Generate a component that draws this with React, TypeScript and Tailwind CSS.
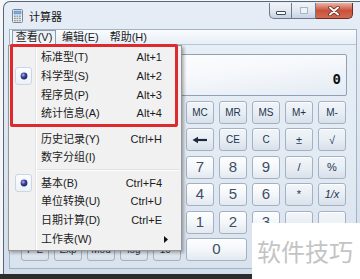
import React from "react";

type Cell = {
  t?: React.ReactNode;
  k?: "d" | "o" | "s";
  cls?: string;
};

function CalcBtn({ t, k = "o", cls = "" }: Cell) {
  const base =
    "flex items-center justify-center rounded-[3px] border border-[#a3b1c2] shadow-[inset_0_1px_0_rgba(255,255,255,0.9)] select-none";
  const tone =
    k === "d"
      ? "bg-linear-to-b from-[#fdfefe] via-[#f4f7fa] to-[#e3e9f0] text-[15px] text-[#3e4f64]"
      : k === "s"
      ? "bg-linear-to-b from-[#f3f6fa] via-[#e9eef4] to-[#d9e1ea] text-[10px] text-[#22364f]"
      : "bg-linear-to-b from-[#f1f5f9] via-[#e8eef4] to-[#d8e0ea] text-[10px] text-[#22364f]";
  return <div className={`${base} ${tone} ${cls}`}>{t}</div>;
}

function BackArrow() {
  return (
    <svg width="16" height="8" viewBox="0 0 16 8">
      <path d="M5 4 H15" stroke="#1c2a3c" strokeWidth="2.2" />
      <path d="M0.5 4 L6 0.8 L6 7.2 Z" fill="#1c2a3c" />
    </svg>
  );
}

function Bullet() {
  return (
    <div className="ml-[6px] w-[17px] h-[18px] rounded-[3px] border border-[#c9d6e5] bg-linear-to-b from-[#fbfcfe] to-[#edf2f8] flex items-center justify-center">
      <svg width="8" height="8" viewBox="0 0 8 8">
        <defs>
          <radialGradient id="bg1" cx="0.38" cy="0.35" r="0.7">
            <stop offset="0" stopColor="#b4b9ec" />
            <stop offset="0.45" stopColor="#3d469f" />
            <stop offset="1" stopColor="#1a205c" />
          </radialGradient>
        </defs>
        <circle cx="4" cy="4" r="3.4" fill="url(#bg1)" />
      </svg>
    </div>
  );
}

function MenuItem({
  label,
  sc,
  bullet = false,
  arrow = false,
}: {
  label: string;
  sc?: string;
  bullet?: boolean;
  arrow?: boolean;
}) {
  return (
    <div className="flex items-center h-[18.75px] text-[11px] text-[#1c1c1c]">
      <div className="w-[32px] h-full flex items-center">{bullet ? <Bullet /> : null}</div>
      <div className="flex-1 whitespace-nowrap">{label}</div>
      {sc ? <div className="pr-[19px] whitespace-nowrap">{sc}</div> : null}
      {arrow ? (
        <div className="pr-[13px]">
          <svg width="4" height="7" viewBox="0 0 4 7">
            <path d="M0 0 L4 3.5 L0 7 Z" fill="#111" />
          </svg>
        </div>
      ) : null}
    </div>
  );
}

function Sep() {
  return (
    <div className="h-[6.5px] flex flex-col justify-center pl-[28px] pr-[2px]">
      <div className="h-px bg-[#e0e0e0]" />
      <div className="h-px bg-white" />
    </div>
  );
}

function TitleIcon() {
  return (
    <svg width="11" height="14" viewBox="0 0 11 14">
      <rect x="0.5" y="0.5" width="10" height="13" rx="1" fill="#eef1f4" stroke="#7a8591" />
      <rect x="2" y="2" width="7" height="3" fill="#79aee3" stroke="#4f7fb3" strokeWidth="0.5" />
      {[0, 1, 2].map((r) =>
        [0, 1, 2].map((c) => (
          <rect key={`${r}-${c}`} x={2 + c * 2.5} y={6.5 + r * 2.2} width="1.8" height="1.4" fill="#8d97a2" />
        ))
      )}
    </svg>
  );
}

export default function App() {
  const cells: Cell[] = [
    { t: "" }, { t: "Inv" }, { t: "ln" }, { t: "(" }, { t: ")" },
    { t: <BackArrow /> }, { t: "CE" }, { t: "C" }, { t: "±", cls: "text-[11px]" }, { t: "√", cls: "text-[11px]" },
    { t: "Int" }, { t: "sinh" }, { t: "sin" }, { t: "x²" }, { t: "n!" },
    { t: "7", k: "d" }, { t: "8", k: "d" }, { t: "9", k: "d" }, { t: "/", k: "s", cls: "text-[11px]" }, { t: "%", cls: "text-[11px]" },
    { t: "dms" }, { t: "cosh" }, { t: "cos" }, { t: "xʸ" }, { t: "ʸ√x" },
    { t: "4", k: "d" }, { t: "5", k: "d" }, { t: "6", k: "d" }, { t: "*", k: "s", cls: "text-[11px]" }, { t: "1/x", cls: "text-[11px] italic" },
    { t: "π" }, { t: "tanh" }, { t: "tan" }, { t: "x³" }, { t: "∛x" },
    { t: "1", k: "d" }, { t: "2", k: "d" }, { t: "3", k: "d" }, { t: "-", k: "s", cls: "text-[11px]" }, { t: "", cls: "row-span-2" },
    { t: "F-E" }, { t: "Exp" }, { t: "Mod" }, { t: "log" }, { t: "10ˣ" },
    { t: "0", k: "d", cls: "col-span-2" }, { t: ".", k: "d" }, { t: "+", k: "s", cls: "text-[12px]" },
  ];

  return (
    <div className="relative w-[360px] h-[279px] overflow-hidden bg-[#2c2c2c] font-['Liberation_Sans','Noto_Sans_CJK_SC',sans-serif]">
      <div className="h-[274px] bg-[#f6f6f6] flex flex-col">
        <div className="ml-[3px] mt-[1px] w-[362px] h-[273px] flex flex-col rounded-tl-[7px] border-l border-t border-[#56667b] bg-linear-to-b from-[#e6edf6] via-[#dce6f1] to-[#d2deeb]">
          <div className="h-[27px] flex items-start">
            <div className="ml-[8px] mt-[7px]">
              <TitleIcon />
            </div>
            <div className="ml-[6px] mt-[6px] text-[11px] text-[#141414] font-['Noto_Sans_CJK_SC',sans-serif]">计算器</div>
            <div className="ml-auto mr-[12px] mt-[1px] flex h-[16px]">
              <div className="w-[23px] h-full rounded-bl-[5px] border border-t-0 border-[#6b7a8e] bg-linear-to-b from-[#f1f4f8] via-[#e1e8f0] to-[#c6d2e0] flex items-end justify-center pb-[3px]">
                <div className="w-[10px] h-[4px] border border-[#3c4b5e] bg-white rounded-[1px]" />
              </div>
              <div className="w-[24px] h-full border-b border-r border-[#6b7a8e] bg-linear-to-b from-[#f1f4f8] via-[#e1e8f0] to-[#c6d2e0] flex items-center justify-center">
                <div className="w-[8px] h-[7px] border border-[#a9b6c5] bg-[#eef2f6]" />
              </div>
              <div className="w-[37px] h-full rounded-br-[5px] border-b border-r border-[#6b2d22] bg-linear-to-b from-[#eab1a3] via-[#c9513b] to-[#d26a52] flex items-center justify-center">
                <svg width="12" height="10" viewBox="0 0 12 10">
                  <path d="M2 1.5 L10 8.5 M10 1.5 L2 8.5" stroke="#5a1f16" strokeWidth="3.4" strokeLinecap="round" />
                  <path d="M2 1.5 L10 8.5 M10 1.5 L2 8.5" stroke="#ffffff" strokeWidth="2" strokeLinecap="round" />
                </svg>
              </div>
            </div>
          </div>

          <div className="ml-[5px] w-[348px] h-[240px] flex flex-col border border-[#a3b2c5]">
            <div className="h-[15px] flex items-center border-b border-[#b7c4d4] bg-linear-to-b from-[#fafcfe] to-[#e7eef6] text-[11px] text-[#1c1c1c]">
              <div className="ml-[2px] w-[44px] h-[15px] border border-[#8d9cb0] bg-linear-to-b from-[#e9eef4] to-[#f5f8fb] flex items-center justify-center">
                查看(V)
              </div>
              <div className="ml-[6px]">编辑(E)</div>
              <div className="ml-[11px]">帮助(H)</div>
            </div>
            <div className="flex-1 pt-[9px] pl-[10px] bg-linear-to-b from-[#e7eef6] via-[#e2eaf3] to-[#d9e3ee]">
              <div className="w-[327px] h-[42px] rounded-[2px] border border-[#8fa1b7] bg-linear-to-br from-[#ffffff] via-[#f7f9fc] to-[#e4ebf4] flex items-end justify-end pr-[5px] pb-[9px]">
                <span className="font-['DejaVu_Sans_Mono',monospace] font-bold text-[14px] leading-none text-[#111]">0</span>
              </div>
              <div className="mt-[5px] ml-[1px] grid grid-cols-[repeat(10,28px)] grid-rows-[repeat(6,23px)] gap-x-[5px] gap-y-[4.4px]">
                <div className="col-span-5 rounded-[3px] border border-[#a9b7c8]" />
                <CalcBtn t="MC" />
                <CalcBtn t="MR" />
                <CalcBtn t="MS" />
                <CalcBtn t="M+" />
                <CalcBtn t="M-" />
                {cells.map((c, i) => (
                  <CalcBtn key={i} t={c.t} k={c.k} cls={c.cls} />
                ))}
              </div>
            </div>
          </div>
        </div>
      </div>

      <div className="absolute left-[8px] top-[45px] w-[174px] h-[206px] border border-[#979797] bg-[#f1f1f1] shadow-[2px_2px_3px_rgba(0,0,0,0.3)] pt-[2px]">
        <div className="absolute left-[26px] top-0 bottom-0 w-[2px] border-l border-[#e2e3e3] bg-white" />
        <div className="relative">
          <MenuItem label="标准型(T)" sc="Alt+1" />
          <MenuItem label="科学型(S)" sc="Alt+2" bullet />
          <MenuItem label="程序员(P)" sc="Alt+3" />
          <MenuItem label="统计信息(A)" sc="Alt+4" />
          <Sep />
          <MenuItem label="历史记录(Y)" sc="Ctrl+H" />
          <MenuItem label="数字分组(I)" />
          <Sep />
          <MenuItem label="基本(B)" sc="Ctrl+F4" bullet />
          <MenuItem label="单位转换(U)" sc="Ctrl+U" />
          <MenuItem label="日期计算(D)" sc="Ctrl+E" />
          <MenuItem label="工作表(W)" arrow />
        </div>
      </div>

      <div className="absolute left-[10px] top-[44px] w-[168px] h-[83px] border-[3px] border-[#dc2a2f] rounded-[2px]" />

      <div className="absolute left-[252px] top-[223px] w-[108px] h-[56px] bg-white flex items-center pl-[5px]">
        <span className="text-[24px] leading-none text-[#c4c4c4] font-['Noto_Sans_CJK_SC',sans-serif] whitespace-nowrap">软件技巧</span>
      </div>
    </div>
  );
}
